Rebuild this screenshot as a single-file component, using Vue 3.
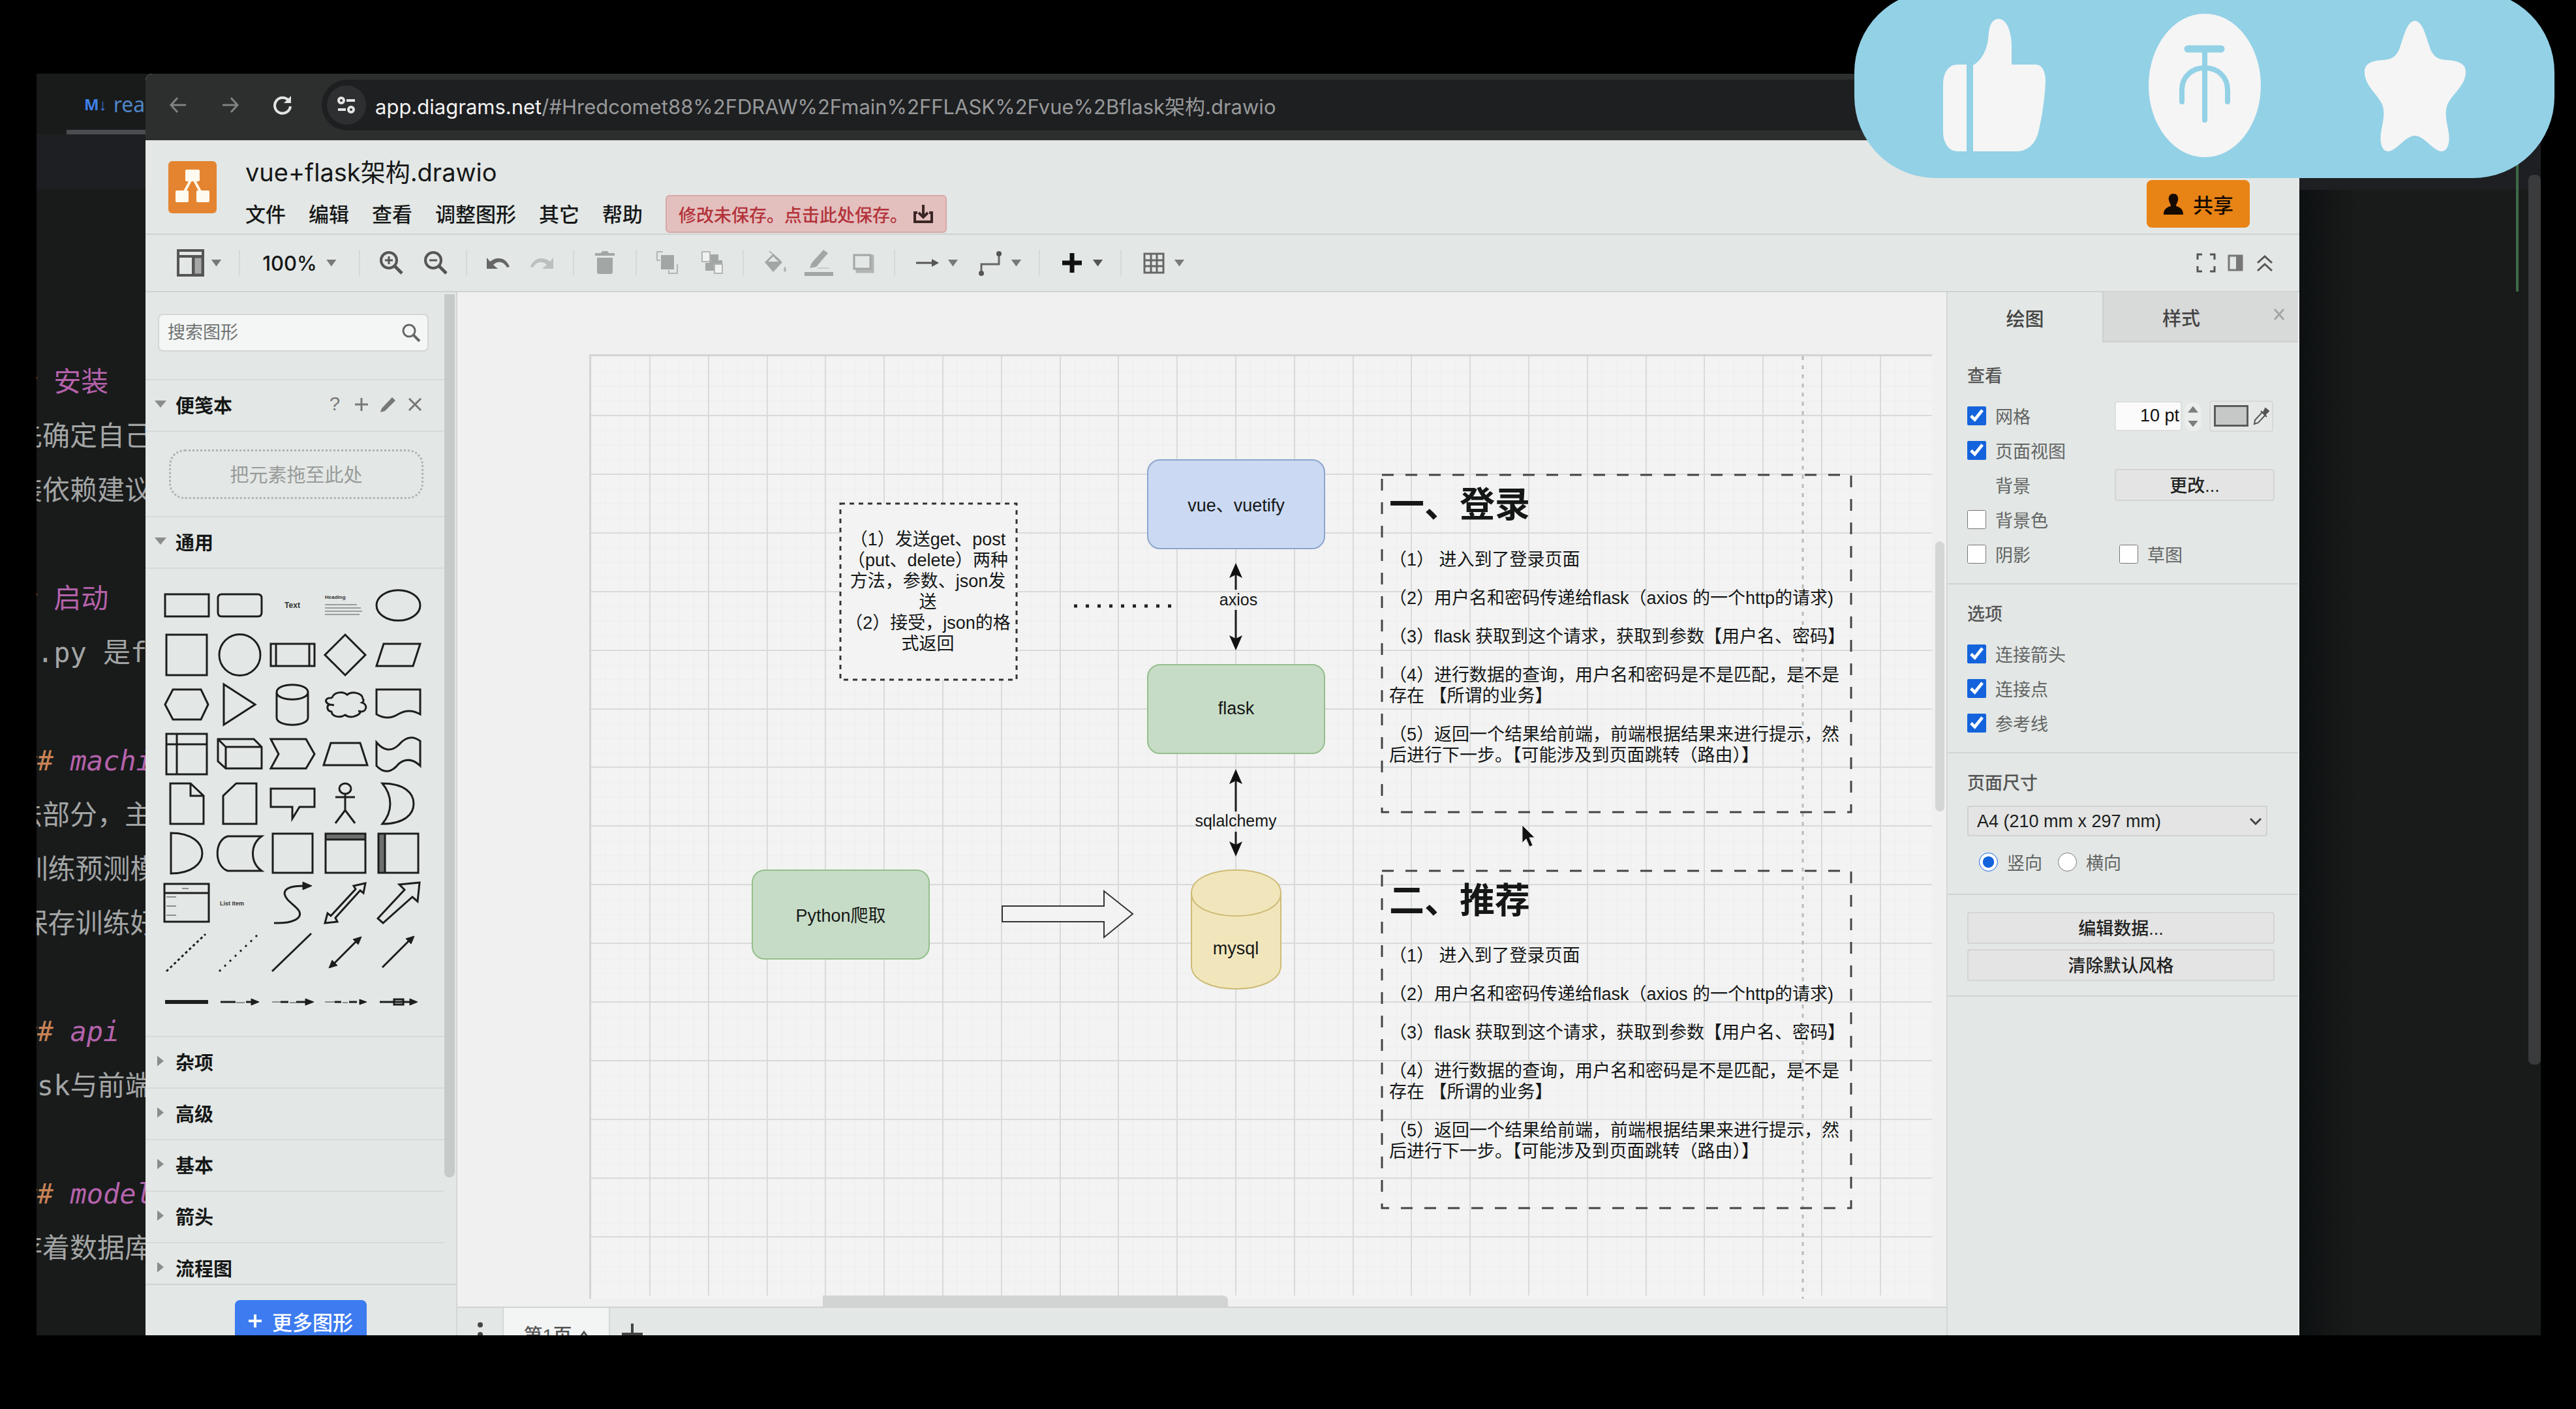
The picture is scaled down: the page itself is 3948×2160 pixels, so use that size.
<script setup>
import { ref } from 'vue'

const editorLines = [
  [['#', 'grey'], ['## ', 'orange'], ['安装', 'pink']],
  [['请先确定自己', 'grey']],
  [['安装依赖建议', 'grey']],
  [],
  [['#', 'grey'], ['## ', 'orange'], ['启动', 'pink']],
  [['run.py 是fl', 'grey']],
  [],
  [['#### ', 'orange'], ['machi', 'pink it']],
  [['算法部分，主', 'grey']],
  [['- 训练预测模', 'grey']],
  [['- 保存训练好', 'grey']],
  [],
  [['#### ', 'orange'], ['api', 'pink it']],
  [['flask与前端', 'grey']],
  [],
  [['#### ', 'orange'], ['model', 'pink it']],
  [['保存着数据库', 'grey']]
]

const menus = ['文件', '编辑', '查看', '调整图形', '其它', '帮助']
const collapsed = ['杂项', '高级', '基本', '箭头', '流程图']

// Palette thumbnails, drawn in an 81 x 76 cell
const shapes = [
  { d: 'M7 21H74V55H7Z' },
  { d: 'M13 21H68Q74 21 74 27V49Q74 55 68 55H13Q7 55 7 49V27Q7 21 13 21Z' },
  { label: 'Text', size: 12 },
  { heading: true },
  { d: 'M7 38A33 23 0 1 1 74 38A33 23 0 1 1 7 38Z' },
  { d: 'M9 7H71V69H9Z' },
  { d: 'M9 38A31 31 0 1 1 72 38A31 31 0 1 1 9 38Z' },
  { d: 'M7 21H74V55H7ZM15 21V55M66 21V55' },
  { d: 'M40 7L71 38L40 69L9 38Z' },
  { d: 'M18 21H74L63 55H7Z' },
  { d: 'M7 38L19 15H62L73 38L62 61H19Z' },
  { d: 'M16 7L64 38L16 69Z' },
  { d: 'M16 19V58C16 73 64 73 64 58V19C64 4 16 4 16 19C16 34 64 34 64 19' },
  { d: 'M20 28C22 19 36 17 43 23C50 17 66 20 67 29C69 31 68 34 66 35C75 38 73 49 64 49C60 56 48 60 40 54C32 59 20 57 19 49C12 48 11 40 16 38C7 34 10 27 20 28M16 38L23 39M60 48L65 49' },
  { d: 'M7 15H74V53Q57 43 40 53Q24 63 7 53Z' },
  { d: 'M9 7H71V69H9ZM25 7V69M9 23H71' },
  { d: 'M7 15H62L74 27V60H19L7 49ZM7 15L19 27V60M19 27H74' },
  { d: 'M7 15H61L74 38L61 60H7L19 38Z' },
  { d: 'M18 21H63L74 55H7Z' },
  { d: 'M7 20Q24 40 41 24Q57 5 74 18V56Q57 40 41 53Q24 74 7 56Z' },
  { d: 'M15 7H46L66 26V69H15ZM46 7V26H66' },
  { d: 'M35 7H66V69H15V26Z' },
  { d: 'M7 15H74V43H51L40 61V43H7Z' },
  { d: 'M31 15A9 8 0 1 1 49 15A9 8 0 1 1 31 15ZM40 23V48M25 28H55M40 48L25 68M40 48L55 68' },
  { d: 'M16 7C50 7 64 22 64 38C64 54 50 69 16 69C32 50 32 26 16 7Z' },
  { d: 'M16 7C48 7 64 22 64 38C64 54 48 69 16 69Z' },
  { d: 'M22 12H74C56 25 56 52 74 65H22C1 58 1 18 22 12Z' },
  { d: 'M10 8H71V68H10Z' },
  { d: 'M10 8H71V68H10ZM10 17H71', bar: 'M10 8H71V17H10Z' },
  { d: 'M10 8H71V68H10ZM20 8V68', bar: 'M10 8H20V68H10Z' },
  { d: 'M6 9H74V67H6ZM6 23H74', thin: 'M33 16H43M9 29H24M9 43H24M9 57H24' },
  { label: 'List Item', size: 9, left: true },
  { d: 'M12 69C40 70 57 62 50 50C44 41 30 35 28 24C28 14 42 12 60 12', head: 'M70 12L56 6V18Z' },
  { d: 'M9 69L13 54L18 58L56 17L53 12L71 8L68 23L63 19L25 61L28 67Z' },
  { d: 'M9 62L50 18L42 10L73 7L70 36L62 29L17 69Z' },
  { d: 'M9 67L69 10', dash: '4 4' },
  { d: 'M9 67L69 10', dash: '3 8' },
  { d: 'M9 67L69 9' },
  { d: 'M20 58L60 18', head: 'M15 62L20 50L28 58ZM65 14L52 18L60 26Z' },
  { d: 'M16 61L58 19', head: 'M65 13L52 17L60 25Z' },
  { d: 'M7 38H73', bold: true },
  { d: 'M11 38H34M50 38H60', thin: 'M35 39H48', head: 'M70 38L58 33V43Z' },
  { d: 'M22 38H34M46 38H62', thin: 'M9 38H22M36 39H46', head: 'M73 38L60 33V43Z' },
  { d: 'M24 38H34M46 38H58', thin: 'M9 38H24M36 39H44', head: 'M73 38L62 34V42Z' },
  { d: 'M12 38H62M34 34H48V42H34Z', head: 'M70 38L58 33V43Z' }
]

const vLines = Array.from({ length: 22 }, (_, i) => Math.round(90 + i * 89.8))
const hLines = Array.from({ length: 15 }, (_, i) => Math.round(91 + i * 89.9))
const vMinor = Array.from({ length: 91 }, (_, i) => Math.round(i * 22.45))
const hMinor = Array.from({ length: 64 }, (_, i) => Math.round(1 + i * 22.5))

const notes = [
  { title: '一、登录', cls: 'note-login' },
  { title: '二、推荐', cls: 'note-rec' }
]
const steps = [
  '（1） 进入到了登录页面',
  '（2）用户名和密码传递给flask（axios 的一个http的请求)',
  '（3）flask 获取到这个请求，获取到参数【用户名、密码】',
  '（4）进行数据的查询，用户名和密码是不是匹配，是不是存在 【所谓的业务】',
  '（5）返回一个结果给前端，前端根据结果来进行提示，然后进行下一步。【可能涉及到页面跳转（路由）】'
]

const search = ref('')
const gridOn = ref(true)
const pageView = ref(true)
const bgColor = ref(false)
const shadow = ref(false)
const sketch = ref(false)
const arrows = ref(true)
const points = ref(true)
const guides = ref(true)
const gridSize = ref('10 pt')
const paper = ref('a4')
const orient = ref('portrait')
</script>

<template>
  <div class="screen" lang="zh-CN">
    <div class="recording">
      <aside class="editor">
        <div class="editor-tab"><span class="md">M↓</span><span>readme</span></div>
        <div class="editor-strip"></div>
        <div class="code">
          <p v-for="(line, i) in editorLines" :key="i">
            <span v-for="(part, j) in line" :key="j" :class="part[1]">{{ part[0] }}</span>
          </p>
        </div>
      </aside>

      <section class="browser">
        <header class="chrome">
          <button class="nav" aria-label="后退"><svg width="30" height="30" viewBox="0 0 30 30"><path d="M27 15H4M14 4L4 15L14 26" stroke="#7f8182" /></svg></button>
          <button class="nav" aria-label="前进"><svg width="30" height="30" viewBox="0 0 30 30"><path d="M3 15H26M16 4L26 15L16 26" stroke="#7f8182" /></svg></button>
          <button class="nav" aria-label="刷新"><svg width="32" height="32" viewBox="0 0 32 32"><path d="M26 10A12 12 0 1 0 28 18" stroke="#e4e4e4" stroke-width="4" /><path d="M29 2V13H18Z" fill="#e4e4e4" stroke="none" /></svg></button>
          <div class="address">
            <span class="tune"><svg width="30" height="30" viewBox="0 0 30 30"><g stroke="#e4e4e4" stroke-width="4"><circle cx="7" cy="8" r="4" /><path d="M15 8H28M2 22H14" /><circle cx="22" cy="22" r="4" /></g></svg></span>
            <span class="url"><b>app.diagrams.net</b>/#Hredcomet88%2FDRAW%2Fmain%2FFLASK%2Fvue%2Bflask架构.drawio</span>
          </div>
        </header>

        <div class="title-area">
          <svg class="logo" width="74" height="80" viewBox="0 0 74 80">
            <rect width="74" height="80" rx="6" fill="#e48430" />
            <path d="M37 24L21 54M37 24L53 54" stroke="#fff6e6" stroke-width="4" />
            <g fill="#fffaf0"><rect x="26" y="13" width="22" height="18" rx="2" /><rect x="11" y="45" width="20" height="18" rx="2" /><rect x="43" y="45" width="20" height="18" rx="2" /></g>
          </svg>
          <div class="titles">
            <h1>vue+flask架构.drawio</h1>
            <nav class="menubar">
              <button v-for="m in menus" :key="m">{{ m }}</button>
              <button class="unsaved">修改未保存。点击此处保存。
                <svg width="32" height="30" viewBox="0 0 32 30"><path d="M16 1V18M9 13L16 20L23 13M7 13H3V27H29V13H25" fill="none" stroke="#3b2525" stroke-width="4" /></svg>
              </button>
            </nav>
          </div>
          <button class="share">
            <svg width="32" height="34" viewBox="0 0 32 34"><path d="M16 1C22 1 24 6 23 11C22 15 20 17 20 20C28 22 31 26 31 33H1C1 26 4 22 12 20C12 17 10 15 9 11C8 6 10 1 16 1Z" fill="#140a00" /></svg>
            共享
          </button>
        </div>

        <div class="toolbar">
          <div class="group">
            <button class="drop" aria-label="视图"><svg class="ico" viewBox="0 0 44 44"><path d="M3 3H41V41H3ZM3 12H41M26 12V41" stroke="#555" stroke-width="4" /><path d="M28 14H39V39H28Z" fill="#a5a8a7" /></svg><i class="caret"></i></button>
          </div>
          <div class="group">
            <button class="zoom">100%<i class="caret"></i></button>
          </div>
          <div class="group">
            <button class="tool" aria-label="放大"><svg class="ico" viewBox="0 0 44 44"><circle cx="19" cy="18" r="12" stroke-width="4" /><path d="M28 27L39 38" stroke-width="5" /><path d="M19 12V24M13 18H25" stroke-width="3" /></svg></button>
            <button class="tool" aria-label="缩小"><svg class="ico" viewBox="0 0 44 44"><circle cx="19" cy="18" r="12" stroke-width="4" /><path d="M28 27L39 38" stroke-width="5" /><path d="M13 18H25" stroke-width="3" /></svg></button>
          </div>
          <div class="group">
            <button class="tool" aria-label="撤销"><svg class="ico" viewBox="0 0 44 44"><path d="M5 14V31H22L15 25C22 18 31 20 36 29L40 28C35 14 21 11 10 20Z" fill="#666" stroke="none" /></svg></button>
            <button class="tool" aria-label="重做"><svg class="ico" viewBox="0 0 44 44"><path d="M39 14V31H22L29 25C22 18 13 20 8 29L4 28C9 14 23 11 34 20Z" fill="#bbbfbd" stroke="none" /></svg></button>
          </div>
          <div class="group">
            <button class="tool" aria-label="删除"><svg class="ico" viewBox="0 0 44 44"><path d="M7 7H16L18 4H26L28 7H37V11H7ZM10 14H34V36Q34 39 31 39H13Q10 39 10 36Z" fill="#a2a6a4" stroke="none" /></svg></button>
          </div>
          <div class="group">
            <button class="tool" aria-label="移至前面"><svg class="ico" viewBox="0 0 44 44"><path d="M15 5H6V18H11M37 24V38H24V33" stroke="#b2b5b4" stroke-width="2" /><rect x="12" y="10" width="20" height="22" fill="#a2a6a4" stroke="none" /></svg></button>
            <button class="tool" aria-label="移至后面"><svg class="ico" viewBox="0 0 44 44"><path d="M18 9H32V18H38V31H26V34H12V22H18Z" fill="#a2a6a4" stroke="none" /><rect x="7" y="5" width="12" height="15" fill="#f0f2f1" stroke="#b2b5b4" stroke-width="2" /><rect x="26" y="24" width="12" height="14" fill="#f0f2f1" stroke="#b2b5b4" stroke-width="2" /></svg></button>
          </div>
          <div class="group">
            <button class="tool" aria-label="填充颜色"><svg class="ico" viewBox="0 0 44 44"><path d="M14 4L30 18" stroke="#b2b5b4" stroke-width="2" /><path d="M20 8L34 21L20 36L7 21ZM20 12L12 20H28Z" fill="#a2a6a4" fill-rule="evenodd" stroke="none" /><path d="M38 27Q42 34 38 36Q34 34 38 27Z" fill="#b2b5b4" stroke="none" /></svg></button>
            <button class="tool" aria-label="线条颜色"><svg class="ico" viewBox="0 0 44 44"><path d="M8 30L11 22L29 2L36 7L18 28Z" fill="#a2a6a4" stroke="none" /><path d="M0 39H44" stroke="#a2a6a4" stroke-width="6" /><path d="M20 30H38" stroke="#c8cbca" stroke-width="2" /></svg></button>
            <button class="tool" aria-label="阴影"><svg class="ico" viewBox="0 0 44 44"><path d="M9 11H37V36H12V32" fill="#b2b5b4" stroke="#b2b5b4" stroke-width="3" /><rect x="8" y="10" width="25" height="21" fill="#e3e7e5" stroke="#a2a6a4" stroke-width="3" /></svg></button>
          </div>
          <div class="group">
            <button class="drop" aria-label="连接"><svg class="ico" viewBox="0 0 44 44"><path d="M5 22H34" stroke-width="3" /><path d="M40 22L29 16V28Z" fill="#555" stroke="none" /></svg><i class="caret"></i></button>
            <button class="drop" aria-label="航点"><svg class="ico" viewBox="0 0 44 44"><path d="M8 38V24H35V8" stroke="#666" stroke-width="3" /><circle cx="8" cy="38" r="4" fill="#555" stroke="none" /><circle cx="35" cy="8" r="4" fill="#555" stroke="none" /></svg><i class="caret"></i></button>
          </div>
          <div class="group">
            <button class="drop" aria-label="插入"><svg class="ico" viewBox="0 0 44 44"><path d="M22 7V37M7 22H37" stroke="#111" stroke-width="7" /></svg><i class="caret dark"></i></button>
          </div>
          <div class="group last">
            <button class="drop" aria-label="表格"><svg class="ico" viewBox="0 0 44 44"><path d="M8 8H37V37H8ZM18 8V37M27 8V37M8 18H37M8 27H37" stroke="#666" stroke-width="3" /></svg><i class="caret"></i></button>
          </div>
          <div class="right-tools">
            <button aria-label="全屏"><svg width="30" height="30" viewBox="0 0 30 30"><path d="M2 10V2H9M21 2H28V10M28 20V28H21M9 28H2V20" /></svg></button>
            <button aria-label="格式"><svg width="30" height="30" viewBox="0 0 30 30"><path d="M5 4H25V26H5Z" stroke="#777" /><path d="M16 4H25V26H16Z" fill="#777" stroke="none" /></svg></button>
            <button aria-label="折叠"><svg width="30" height="30" viewBox="0 0 30 30"><path d="M4 15L15 5L26 15M4 27L15 17L26 27" /></svg></button>
          </div>
        </div>

        <div class="workspace">
          <aside class="sidebar">
            <div class="side-scroll">
              <div class="side-content">
                <div class="search">
                  <input v-model="search" type="text" placeholder="搜索图形" aria-label="搜索图形" />
                  <svg width="30" height="30" viewBox="0 0 30 30"><circle cx="12" cy="12" r="9" fill="none" stroke="#666" stroke-width="3" /><path d="M19 19L28 28" stroke="#666" stroke-width="4" /></svg>
                </div>
                <div class="section-head">
                  <i class="fold open"></i><span>便笺本</span>
                  <span class="pad-tools">
                    <button aria-label="帮助">?</button>
                    <button aria-label="添加"><svg width="20" height="20" viewBox="0 0 20 20"><path d="M10 0V20M0 10H20" /></svg></button>
                    <button aria-label="编辑"><svg width="26" height="26" viewBox="0 0 26 26"><path d="M1 25L3 19L19 2L24 7L8 23Z" fill="#777" stroke="none" /></svg></button>
                    <button aria-label="关闭"><svg width="20" height="20" viewBox="0 0 20 20"><path d="M1 1L19 19M19 1L1 19" /></svg></button>
                  </span>
                </div>
                <div class="pad"><div class="pad-drop">把元素拖至此处</div></div>
                <div class="section-head"><i class="fold open"></i><span>通用</span></div>
                <div class="palette">
                  <button v-for="(s, i) in shapes" :key="i" :aria-label="'图形 ' + (i + 1)">
                    <svg width="81" height="76" viewBox="0 0 81 76">
                      <path v-if="s.bar" :d="s.bar" fill="#6d706f" stroke="none" />
                      <path v-if="s.d" :d="s.d" :stroke-dasharray="s.dash" :stroke-width="s.bold ? 6 : 3" />
                      <path v-if="s.thin" :d="s.thin" stroke="#8b8e8d" stroke-width="2" />
                      <path v-if="s.head" :d="s.head" fill="#1c1e1e" stroke-width="1" />
                      <text v-if="s.label" :x="s.left ? 10 : 40" y="42" :text-anchor="s.left ? 'start' : 'middle'" :font-size="s.size">{{ s.label }}</text>
                      <template v-if="s.heading">
                        <text x="9" y="28" font-size="8">Heading</text>
                        <path d="M9 37H58M9 42H64M9 47H66M9 52H62" stroke="#9a9d9c" stroke-width="2" />
                      </template>
                    </svg>
                  </button>
                </div>
                <div v-for="c in collapsed" :key="c" class="section-head"><i class="fold"></i><span>{{ c }}</span></div>
              </div>
              <div class="side-track"><div class="side-thumb"></div></div>
            </div>
            <div class="side-foot"><button class="more"><svg width="20" height="20" viewBox="0 0 20 20"><path d="M10 0V20M0 10H20" stroke="#fff" stroke-width="4" /></svg>更多图形</button></div>
          </aside>

          <main class="canvas">
            <div class="board">
              <div class="paper">
                <svg class="grid" width="2056" height="1446">
                  <g stroke="#ededed" stroke-width="1">
                    <line v-for="x in vMinor" :key="'a' + x" :x1="x" :x2="x" y1="0" y2="1440" />
                    <line v-for="y in hMinor" :key="'b' + y" x1="0" x2="2056" :y1="y" :y2="y" />
                  </g>
                  <g stroke="#d9dada" stroke-width="2">
                    <line v-for="x in vLines" :key="'c' + x" :x1="x" :x2="x" y1="0" y2="1440" />
                    <line v-for="y in hLines" :key="'d' + y" x1="0" x2="2056" :y1="y" :y2="y" />
                  </g>
                  <line x1="1857" x2="1857" y1="0" y2="1446" stroke="#b9bbbb" stroke-width="3" stroke-dasharray="6 8" />
                </svg>
              </div>

              <svg class="wires" width="2281" height="1540">
                <line x1="945" x2="1096" y1="481" y2="481" stroke="#222" stroke-width="5" stroke-dasharray="5 13" />
                <g stroke="#1a1a1a" stroke-width="3" fill="#111">
                  <path d="M1193 431V456M1193 487V531M1193 746V796M1193 827V851" />
                  <path stroke="none" d="M1193 415L1203 438L1193 433L1183 438ZM1193 549L1203 526L1193 531L1183 526ZM1193 731L1203 754L1193 749L1183 754ZM1193 865L1203 842L1193 847L1183 842Z" />
                </g>
                <path d="M835 941H991V918L1035 953L991 989V965H835Z" fill="#f3f3f3" stroke="#333" stroke-width="2" />
                <path d="M1125 921C1125 874 1262 874 1262 921V1032C1262 1080 1125 1080 1125 1032Z" fill="#f1e6bb" stroke="#cdbb77" stroke-width="2" />
                <path d="M1125 921C1125 968 1262 968 1262 921" fill="none" stroke="#cdbb77" stroke-width="2" />
                <g fill="none" stroke="#444" stroke-width="3">
                  <rect x="587" y="324" width="270" height="270" fill="#f3f3f3" stroke-dasharray="7 7" stroke="#333" />
                  <rect x="1417" y="280" width="719" height="517" stroke-dasharray="18 18" />
                  <rect x="1417" y="887" width="719" height="517" stroke-dasharray="18 18" />
                </g>
              </svg>

              <div class="node blue n-vue">vue、vuetify</div>
              <div class="node green n-flask">flask</div>
              <div class="node green n-py">Python爬取</div>
              <div class="caption n-mysql">mysql</div>
              <div class="caption edge n-axios">axios</div>
              <div class="caption edge n-sql">sqlalchemy</div>
              <div class="methods">（1）发送get、post<br />（put、delete）两种<br />方法，参数、json发<br />送<br />（2）接受，json的格<br />式返回</div>
              <article v-for="n in notes" :key="n.title" class="note" :class="n.cls">
                <h2>{{ n.title }}</h2>
                <p v-for="s in steps" :key="s">{{ s }}</p>
              </article>

              <svg class="pointer" width="24" height="36" viewBox="0 0 24 36"><path d="M1 1V28L7 22L12 34L17 32L12 20H20Z" fill="#111" stroke="#d9dada" stroke-width="1" /></svg>
              <div class="v-thumb"></div>
              <div class="h-thumb"></div>
            </div>
            <footer class="pages">
              <button class="dots" aria-label="页面"><svg width="10" height="60" viewBox="0 0 10 60"><g fill="#444"><circle cx="5" cy="16" r="4" /><circle cx="5" cy="31" r="4" /><circle cx="5" cy="46" r="4" /></g></svg></button>
              <button class="page-tab">第1页 <svg width="16" height="12" viewBox="0 0 16 12"><path d="M2 11L8 3L14 11" fill="none" stroke="#555" stroke-width="3" /></svg></button>
              <button class="add" aria-label="插入页面"><svg width="32" height="32" viewBox="0 0 32 32"><path d="M16 0V32M0 16H32" stroke="#444" stroke-width="4" /></svg></button>
            </footer>
          </main>

          <aside class="format">
            <div class="tabs">
              <button class="tab">绘图</button>
              <button class="tab idle">样式</button>
              <button class="close" aria-label="关闭"><svg width="18" height="20" viewBox="0 0 18 20"><path d="M2 2L16 18M16 2L2 18" stroke="#a4a6a5" stroke-width="3" /></svg></button>
            </div>

            <section class="view">
              <h3>查看</h3>
              <div class="row">
                <label class="half"><input v-model="gridOn" type="checkbox" /><span>网格</span></label>
                <input v-model="gridSize" class="size" type="text" aria-label="网格大小" />
                <span class="spin"><i class="up"></i><i class="down"></i></span>
                <button class="color" aria-label="网格颜色"><i></i><svg width="26" height="30" viewBox="0 0 26 30"><path d="M3 27L4 21L15 9L20 13L9 25ZM13 7L22 16" fill="none" stroke="#555" stroke-width="2" /><path d="M17 9L20 3L25 7L20 12Z" fill="#555" stroke="#555" stroke-width="2" /></svg></button>
              </div>
              <div class="row"><label><input v-model="pageView" type="checkbox" /><span>页面视图</span></label></div>
              <div class="row"><span class="half indent">背景</span><button class="push change">更改...</button></div>
              <div class="row"><label><input v-model="bgColor" type="checkbox" /><span>背景色</span></label></div>
              <div class="row">
                <label class="half"><input v-model="shadow" type="checkbox" /><span>阴影</span></label>
                <label class="second"><input v-model="sketch" type="checkbox" /><span>草图</span></label>
              </div>
            </section>

            <section>
              <h3>选项</h3>
              <div class="row"><label><input v-model="arrows" type="checkbox" /><span>连接箭头</span></label></div>
              <div class="row"><label><input v-model="points" type="checkbox" /><span>连接点</span></label></div>
              <div class="row"><label><input v-model="guides" type="checkbox" /><span>参考线</span></label></div>
            </section>

            <section>
              <h3>页面尺寸</h3>
              <div class="select">
                <select v-model="paper" aria-label="页面尺寸"><option value="a4">A4 (210 mm x 297 mm)</option></select>
                <svg width="20" height="12" viewBox="0 0 20 12"><path d="M2 2L10 10L18 2" fill="none" stroke="#444" stroke-width="3" /></svg>
              </div>
              <div class="radios">
                <label><input v-model="orient" type="radio" value="portrait" name="orient" /><span>竖向</span></label>
                <label><input v-model="orient" type="radio" value="landscape" name="orient" /><span>横向</span></label>
              </div>
            </section>

            <section class="actions">
              <button class="push">编辑数据...</button>
              <button class="push">清除默认风格</button>
            </section>
          </aside>
        </div>
      </section>

      <aside class="editor-right">
        <div class="editor-strip"></div>
        <div class="change-mark"></div>
        <div class="editor-thumb"></div>
      </aside>
    </div>

    <div class="cheer">
      <svg width="1073" height="273" viewBox="0 0 1073 273" fill="#f5f5f5">
        <path d="M172 99V232H158C144 232 136 218 136 202V129C136 112 144 99 158 99Z" />
        <path d="M182 100C196 92 203 76 205 60C206 46 208 29 221 29C235 29 241 52 241 70V99H278C288 99 293 110 293 124C292 152 287 182 282 203C277 222 264 232 249 232H182Z" />
        <ellipse cx="537" cy="131" rx="86" ry="110" />
        <g fill="none" stroke="#93d1e6" stroke-linecap="round">
          <path d="M511 75H562" stroke-width="11" />
          <path d="M537 75V184" stroke-width="8" />
          <path d="M502 156V138C502 117 518 104 537 104C556 104 572 117 572 138V156" stroke-width="8" />
        </g>
        <path d="M859 32C870 32 875 52 881 70C886 86 893 91 908 92C926 93 937 98 937 110C937 131 918 142 909 160C904 174 908 186 911 204C913 220 909 232 900 232C888 232 873 208 859 208C845 208 830 232 818 232C809 232 805 220 807 204C810 186 814 174 809 160C800 142 782 131 782 110C782 98 792 93 810 92C825 91 832 86 837 70C843 52 848 32 859 32Z" />
      </svg>
    </div>
  </div>
</template>

<style>
html,
body {
  background: #000;
  overflow: hidden;
}
</style>

<style scoped>
* {
  box-sizing: border-box;
}

.screen {
  position: relative;
  height: 100vh;
  padding: 113px 54px 113px 56px;
  background: #000;
  font-family: "Liberation Sans", "Noto Sans CJK SC", sans-serif;
  font-size: 27px;
  color: #151717;
}

button {
  display: inline-flex;
  align-items: center;
  justify-content: center;
  padding: 0;
  border: 0;
  background: none;
  font: inherit;
  color: inherit;
}

h1,
h2,
h3,
p {
  margin: 0;
}

svg {
  display: block;
  flex: none;
}

.recording {
  display: flex;
  height: 100%;
  overflow: hidden;
  background: #191b1b;
}

/* Code editor behind the browser */
.editor {
  width: 167px;
  flex: none;
  overflow: hidden;
  white-space: nowrap;
  font-family: "DejaVu Sans Mono", "Noto Sans CJK SC", monospace;
}

.editor-tab {
  display: flex;
  align-items: center;
  gap: 10px;
  height: 93px;
  margin-left: 46px;
  padding: 7px 0 0 27px;
  border-bottom: 7px solid #4b4c50;
  font-family: "Noto Sans", sans-serif;
  font-size: 32px;
  color: #4f86c9;
}

.md {
  font-size: 24px;
  font-weight: 700;
  color: #3f7fe8;
}

.editor-strip {
  height: 84px;
  background: #1e1f23;
}

.code {
  margin: 254px 0 0 -75px;
  font-size: 42px;
  line-height: 83px;
}

.code p {
  height: 83px;
}

.grey {
  color: #a3a5a5;
}

.orange {
  color: #c98355;
  font-style: italic;
}

.pink {
  color: #b562ab;
}

.it {
  font-style: italic;
}

.editor-right {
  position: relative;
  width: 370px;
  flex: none;
  padding-top: 94px;
  background: linear-gradient(90deg, #0e1111, #191b1b 90px);
}

.change-mark {
  position: absolute;
  top: 94px;
  right: 34px;
  width: 4px;
  height: 240px;
  background: #3d6b44;
}

.editor-thumb {
  position: absolute;
  top: 155px;
  right: 0;
  width: 19px;
  height: 1364px;
  border-radius: 8px;
  background: #3a3b3c;
}

/* Browser frame */
.browser {
  display: flex;
  flex: 1;
  flex-direction: column;
  min-width: 0;
  border-radius: 10px 0 0 0;
  overflow: hidden;
  background: #e3e7e5;
}

.chrome {
  display: flex;
  align-items: center;
  height: 102px;
  padding: 0 0 6px 10px;
  flex: none;
  background: #2d2e2e;
}

.nav {
  width: 80px;
  height: 80px;
}

.nav svg,
.tune svg {
  fill: none;
  stroke-width: 3;
}

.address {
  display: flex;
  align-items: center;
  flex: 1;
  gap: 14px;
  height: 78px;
  margin-left: 20px;
  padding-left: 8px;
  border-radius: 39px;
  background: #1e1f21;
}

.tune {
  display: flex;
  align-items: center;
  justify-content: center;
  width: 60px;
  height: 60px;
  border-radius: 30px;
  background: #2e2f30;
}

.url {
  font-family: Inter, "Noto Sans CJK SC", sans-serif;
  font-size: 31px;
  color: #97999a;
  white-space: nowrap;
}

.url b {
  font-weight: 400;
  color: #f2f2f2;
}

/* Title and menus */
.title-area {
  display: flex;
  align-items: flex-start;
  height: 145px;
  padding: 0 76px 0 35px;
  flex: none;
  border-bottom: 2px solid #cfd3d1;
}

.logo {
  margin-top: 32px;
}

.titles {
  flex: 1;
  margin-left: 44px;
  padding-top: 22px;
}

h1 {
  font-family: Inter, "Noto Sans CJK SC", sans-serif;
  font-size: 38px;
  font-weight: 400;
  line-height: 54px;
}

.menubar {
  display: flex;
  align-items: center;
  gap: 35px;
  height: 58px;
  margin-top: 8px;
  font-size: 31px;
}

.menubar button {
  padding-bottom: 4px;
  font-weight: 500;
  white-space: nowrap;
}

.menubar .unsaved {
  gap: 8px;
  height: 58px;
  padding: 0 18px;
  border: 2px solid #d7a9a9;
  border-radius: 6px;
  background: #e3bfbe;
  font-size: 27px;
  color: #b3333a;
}

.share {
  gap: 14px;
  width: 158px;
  height: 73px;
  margin-top: 61px;
  border-radius: 8px;
  background: #e88316;
  font-size: 31px;
  font-weight: 500;
  color: #140a00;
}

/* Toolbar */
.toolbar {
  display: flex;
  align-items: center;
  height: 88px;
  padding: 0 38px 0 20px;
  flex: none;
  border-bottom: 2px solid #cfd3d1;
}

.group {
  display: flex;
  align-items: center;
  height: 40px;
  padding: 0 13px;
  border-right: 2px solid #d5d9d7;
}

.last {
  border-right: 0;
}

.tool {
  width: 68px;
  height: 60px;
}

.drop {
  width: 97px;
  height: 60px;
  gap: 10px;
}

.zoom {
  width: 156px;
  gap: 14px;
  font-family: Inter, sans-serif;
  font-size: 31px;
  font-weight: 500;
}

.ico {
  width: 44px;
  height: 44px;
  fill: none;
  stroke: #555;
}

.caret {
  width: 16px;
  height: 11px;
  background: #777a79;
  clip-path: polygon(0 0, 100% 0, 50% 100%);
}

.dark {
  background: #555;
}

.right-tools {
  display: flex;
  gap: 15px;
  margin-left: auto;
}

.right-tools svg {
  fill: none;
  stroke: #555;
  stroke-width: 3;
}

/* Shape sidebar */
.workspace {
  display: flex;
  flex: 1;
  min-height: 0;
}

.sidebar {
  display: flex;
  flex-direction: column;
  width: 478px;
  flex: none;
  border-right: 2px solid #d3d7d5;
}

.side-scroll {
  display: flex;
  flex: 1;
  min-height: 0;
  overflow: hidden;
}

.side-content {
  width: 458px;
  flex: none;
}

.side-track {
  width: 16px;
  padding-top: 3px;
}

.side-thumb {
  height: 1354px;
  border-radius: 0 0 8px 8px;
  background: #c6cac9;
}

.search {
  position: relative;
  height: 133px;
  padding: 33px 24px 0 19px;
}

.search input {
  width: 100%;
  height: 58px;
  padding: 0 50px 0 13px;
  border: 2px solid #d3d6d5;
  border-radius: 8px;
  background: #f4f6f5;
  font: inherit;
  color: #333;
}

.search input::placeholder {
  color: #707372;
  opacity: 1;
}

.search svg {
  position: absolute;
  top: 47px;
  right: 36px;
}

.section-head {
  display: flex;
  align-items: center;
  height: 79px;
  padding: 0 14px 4px;
  border-top: 2px solid #d6dad8;
  font-size: 29px;
  font-weight: 700;
}

.fold {
  width: 10px;
  height: 16px;
  margin: 0 18px 0 4px;
  background: #8a8d8c;
  clip-path: polygon(0 0, 100% 50%, 0 100%);
}

.open {
  width: 18px;
  height: 11px;
  margin: 0 14px 0 0;
  clip-path: polygon(0 0, 100% 0, 50% 100%);
}

.pad-tools {
  display: flex;
  align-items: center;
  gap: 15px;
  margin: 0 18px 0 auto;
  font-weight: 400;
  color: #777;
}

.pad-tools button {
  width: 26px;
}

.pad-tools svg {
  stroke: #777;
  stroke-width: 3;
}

.pad {
  height: 131px;
  padding: 27px 32px 0 36px;
  border-top: 2px solid #d6dad8;
}

.pad-drop {
  display: flex;
  align-items: center;
  justify-content: center;
  height: 76px;
  padding-bottom: 2px;
  border: 3px dotted #b0b3b2;
  border-radius: 24px;
  font-size: 29px;
  color: #989b9a;
}

.palette {
  display: grid;
  grid-template-columns: repeat(5, 81px);
  height: 718px;
  align-content: start;
  padding: 18px 0 0 23px;
  border-top: 2px solid #d6dad8;
}

.palette svg {
  fill: none;
  stroke: #1c1e1e;
}

.palette text {
  fill: #333;
  stroke: none;
  font-weight: 700;
}

.side-foot {
  height: 79px;
  padding-top: 23px;
  flex: none;
  border-top: 2px solid #cfd3d1;
  text-align: center;
  overflow: hidden;
}

.more {
  gap: 16px;
  width: 202px;
  height: 64px;
  border-radius: 8px;
  background: #3c7bf0;
  font-size: 31px;
  font-weight: 500;
  color: #fff;
}

/* Drawing area */
.canvas {
  display: flex;
  flex: 1;
  flex-direction: column;
  min-width: 0;
  background: #f0f0f0;
}

.board {
  position: relative;
  flex: 1;
  overflow: hidden;
}

.paper {
  position: absolute;
  top: 95px;
  left: 202px;
  right: 22px;
  height: 1448px;
  border-top: 3px solid #d3d5d5;
  border-left: 3px solid #d3d5d5;
  background: #f3f3f3;
  overflow: hidden;
}

.wires {
  position: absolute;
  top: 0;
  left: 0;
}

.node,
.caption,
.methods,
.note,
.pointer,
.v-thumb,
.h-thumb {
  position: absolute;
}

.node {
  display: flex;
  align-items: center;
  justify-content: center;
  width: 273px;
  height: 138px;
  padding-bottom: 2px;
  border: 2px solid;
  border-radius: 20px;
}

.blue {
  border-color: #8ba5cc;
  background: #cbd9f2;
}

.green {
  border-color: #94bf8c;
  background: #c7dcc6;
}

.n-vue {
  top: 256px;
  left: 1057px;
}

.n-flask {
  top: 570px;
  left: 1057px;
}

.n-py {
  top: 885px;
  left: 451px;
}

.caption {
  width: 160px;
  line-height: 32px;
  text-align: center;
}

.edge {
  font-size: 25px;
}

.n-mysql {
  top: 990px;
  left: 1113px;
}

.n-axios {
  top: 455px;
  left: 1117px;
}

.n-sql {
  top: 794px;
  left: 1113px;
}

.methods {
  top: 363px;
  left: 586px;
  width: 270px;
  line-height: 32px;
  text-align: center;
  white-space: nowrap;
}

.note {
  width: 719px;
  padding: 14px 8px 0 10px;
  line-height: 32px;
}

.note h2 {
  margin-bottom: 36px;
  font-size: 54px;
  line-height: 64px;
}

.note p {
  margin-bottom: 27px;
}

.note-login {
  top: 280px;
  left: 1418px;
}

.note-rec {
  top: 887px;
  left: 1418px;
}

.pointer {
  top: 816px;
  left: 1631px;
}

.v-thumb {
  top: 382px;
  right: 3px;
  width: 14px;
  height: 414px;
  border-radius: 7px;
  background: #d4d5d5;
}

.h-thumb {
  left: 560px;
  bottom: 0;
  width: 621px;
  height: 17px;
  border-radius: 0 8px 0 0;
  background: #d2d3d3;
}

.pages {
  display: flex;
  height: 44px;
  flex: none;
  border-top: 2px solid #cfd3d1;
  background: #e3e7e5;
  overflow: hidden;
}

.pages button {
  height: 80px;
}

.dots {
  width: 69px;
}

.page-tab {
  gap: 10px;
  width: 165px;
  border-right: 2px solid #d3d7d5;
  border-left: 2px solid #d3d7d5;
  background: #f3f5f4;
  font-size: 29px;
  font-weight: 500;
  color: #555;
}

.add {
  width: 68px;
}

/* Format panel */
.format {
  width: 541px;
  flex: none;
  border-left: 2px solid #d3d7d5;
  border-right: 2px solid #eef1f0;
  color: #626564;
}

.tabs {
  position: relative;
  display: flex;
  height: 77px;
  font-size: 29px;
}

.tab {
  flex: 1;
  font-weight: 500;
  color: #444;
}

.idle {
  flex: 0 0 300px;
  padding-right: 60px;
  border-bottom: 2px solid #cdd0cf;
  border-left: 2px solid #cdd0cf;
  background: #d8d9d9;
}

.close {
  position: absolute;
  top: 24px;
  right: 20px;
}

.format section {
  padding: 30px 36px 18px 30px;
  border-bottom: 2px solid #d0d4d2;
}

.format .view {
  padding-top: 36px;
}

h3 {
  margin-bottom: 18px;
  font-size: 27px;
  font-weight: 500;
  line-height: 32px;
  color: #555;
}

.row {
  display: flex;
  align-items: center;
  height: 53px;
}

.row label,
.radios label {
  display: flex;
  align-items: center;
}

.row input[type="checkbox"],
.radios input {
  width: 29px;
  height: 29px;
  margin: 0 14px 0 0;
  accent-color: #1463dc;
}

.row .half {
  width: 226px;
  flex: none;
}

.row .indent {
  padding-left: 43px;
}

.row .second {
  margin-left: 7px;
}

.row .size {
  width: 103px;
  height: 46px;
  padding: 0 2px;
  border: 2px solid #dcdfdd;
  border-radius: 4px;
  background: #fafbfa;
  font: inherit;
  text-align: right;
  color: #111;
}

.spin {
  display: flex;
  flex-direction: column;
  align-items: center;
  justify-content: space-around;
  width: 26px;
  height: 44px;
  margin: 2px 12px 0 4px;
  border-radius: 12px;
  background: #ebeeec;
}

.spin i {
  width: 16px;
  height: 10px;
  background: #7b7e7d;
  clip-path: polygon(50% 0, 100% 100%, 0 100%);
}

.spin .down {
  clip-path: polygon(0 0, 100% 0, 50% 100%);
}

.color {
  gap: 6px;
  width: 98px;
  height: 48px;
  border: 2px solid #d6d9d7;
  border-radius: 4px;
  background: #e6e8e7;
}

.color i {
  width: 53px;
  height: 33px;
  border: 3px solid #5a5c5b;
  background: #c6c7c7;
}

.push {
  width: 100%;
  height: 49px;
  padding-bottom: 2px;
  border: 2px solid #d3d5d4;
  border-radius: 4px;
  background: #e3e4e3;
  color: #222;
  font-weight: 500;
}

.row .change {
  width: 246px;
}

.select {
  position: relative;
  width: 460px;
}

.select select {
  width: 100%;
  height: 47px;
  padding: 0 13px;
  border: 2px solid #cfd2d0;
  border-radius: 4px;
  appearance: none;
  background: #e3e4e3;
  font: inherit;
  color: #1c1e1e;
}

.select svg {
  position: absolute;
  top: 18px;
  right: 8px;
}

.radios {
  display: flex;
  gap: 24px;
  height: 70px;
  padding: 8px 0 0 18px;
}

.format .actions {
  display: flex;
  flex-direction: column;
  gap: 8px;
  padding-top: 26px;
  padding-bottom: 22px;
}

/* Like, coin and favourite overlay */
.cheer {
  position: absolute;
  top: -14px;
  right: 33px;
  width: 1073px;
  height: 287px;
  padding-top: 14px;
  border-radius: 125px;
  background: #93d1e6;
}
</style>
